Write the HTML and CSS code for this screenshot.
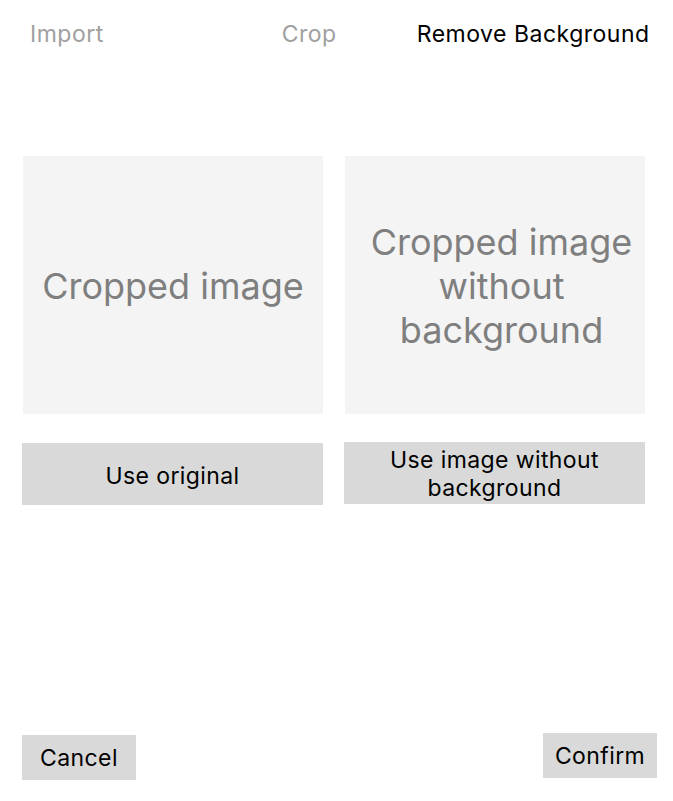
FILE: index.html
```html
<!DOCTYPE html>
<html>
<head>
<meta charset="utf-8">
<link rel="stylesheet" href="styles.css">
</head>
<body>
<div class="page">
  <nav class="steps">
    <span class="step step-import">Import</span>
    <span class="step step-crop">Crop</span>
    <span class="step step-active">Remove Background</span>
  </nav>
  <section class="previews">
    <div class="preview">Cropped image</div>
    <div class="preview preview-right">Cropped image without background</div>
  </section>
  <section class="choices">
    <button class="choice choice-left">Use original</button>
    <button class="choice choice-right">Use image without background</button>
  </section>
  <footer class="actions">
    <button class="action action-cancel">Cancel</button>
    <button class="action action-confirm">Confirm</button>
  </footer>
</div>
</body>
</html>
```
FILE: styles.css
```css
html, body {
  margin: 0;
  padding: 0;
  background: #ffffff;
}
body {
  font-family: Inter, "Noto Sans", sans-serif;
}
.page {
  width: 673px;
  height: 801px;
  display: flex;
  flex-direction: column;
}
.steps {
  display: flex;
  align-items: center;
  height: 68px;
  padding: 0 0 0 30px;
  font-size: 23px;
  letter-spacing: 0.5px;
}
.step {
  color: #a0a0a0;
}
.step-crop {
  margin-left: 178px;
}
.step-active {
  margin-left: 80px;
  color: #000000;
}
.previews {
  display: grid;
  grid-template-columns: 300px 300px;
  column-gap: 22px;
  padding-left: 23px;
  margin-top: 88px;
}
.preview {
  height: 258px;
  background: #f4f4f4;
  color: #7f7f7f;
  font-size: 36px;
  line-height: 44px;
  display: flex;
  align-items: center;
  justify-content: center;
  text-align: center;
  padding: 2px 6px 0 6px;
  box-sizing: border-box;
}
.preview-right {
  padding-left: 19px;
}
.choices {
  display: grid;
  grid-template-columns: 301px 301px;
  column-gap: 21px;
  padding-left: 22px;
  margin-top: 29px;
  align-items: start;
}
.choice {
  border: 0;
  background: #d9d9d9;
  font-family: Inter, "Noto Sans", sans-serif;
  font-size: 23px;
  letter-spacing: 0.4px;
  line-height: 28px;
  color: #000;
  height: 62px;
  padding: 0 30px;
}
.choice-left {
  padding-top: 3px;
}
.choice-right {
  margin-top: -1px;
  padding-top: 2px;
}
.actions {
  margin-top: auto;
  display: flex;
  justify-content: space-between;
  align-items: flex-start;
  padding: 0 16px 21px 22px;
}
.action {
  border: 0;
  background: #d9d9d9;
  font-family: Inter, "Noto Sans", sans-serif;
  font-size: 23px;
  letter-spacing: 0.4px;
  color: #000;
  width: 114px;
  height: 45px;
  padding: 0;
}
.action-cancel {
  margin-top: 2px;
}
```
